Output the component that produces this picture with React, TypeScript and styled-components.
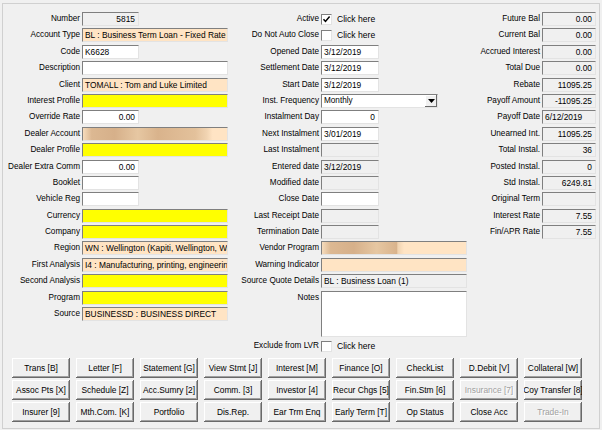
import React from "react";
import styled, { createGlobalStyle, css } from "styled-components";

const GlobalStyle = createGlobalStyle`
  html, body {
    margin: 0;
    padding: 0;
    background: #f0f0f0;
  }
  body {
    font-family: "Liberation Sans", Arial, sans-serif;
    font-size: 8.2px;
    color: #000;
  }
`;

type Tone = "gray" | "white" | "peach" | "yellow" | "smudge";

const toneBg: Record<Tone, string> = {
  gray: "#f0f0f0",
  white: "#ffffff",
  peach: "#ffe4c4",
  yellow: "#ffff00",
  smudge: "#ffe4c4",
};

export default function App() {
  return (
    <>
      <GlobalStyle />
      <Panel>
        <Columns>
          <Column $label={77} $field={146}>
            <Label>Number</Label>
            <Field $tone="gray" $w={57} $right>5815</Field>
            <Label>Account Type</Label>
            <Field $tone="peach">BL : Business Term Loan - Fixed Rate</Field>
            <Label>Code</Label>
            <Field $tone="white" $w={57}>K6628</Field>
            <Label>Description</Label>
            <Field $tone="white" />
            <Label>Client</Label>
            <Field $tone="peach">TOMALL : Tom and Luke Limited</Field>
            <Label>Interest Profile</Label>
            <Field $tone="yellow" />
            <Label>Override Rate</Label>
            <Field $tone="white" $w={57} $right>0.00</Field>
            <Label>Dealer Account</Label>
            <Field $tone="smudge" $smudge={90} />
            <Label>Dealer Profile</Label>
            <Field $tone="yellow" />
            <Label>Dealer Extra Comm</Label>
            <Field $tone="white" $w={57} $right>0.00</Field>
            <Label>Booklet</Label>
            <Field $tone="white" $w={57} />
            <Label>Vehicle Reg</Label>
            <Field $tone="white" $w={57} />
            <Label>Currency</Label>
            <Field $tone="yellow" />
            <Label>Company</Label>
            <Field $tone="yellow" />
            <Label>Region</Label>
            <Field $tone="peach">WN : Wellington (Kapiti, Wellington, Wairarapa)</Field>
            <Label>First Analysis</Label>
            <Field $tone="peach">I4 : Manufacturing, printing, engineering</Field>
            <Label>Second Analysis</Label>
            <Field $tone="yellow" />
            <Label>Program</Label>
            <Field $tone="yellow" />
            <Label>Source</Label>
            <Field $tone="peach">BUSINESSD : BUSINESS DIRECT</Field>
          </Column>

          <Column $label={91} $field={146}>
            <Label>Active</Label>
            <CheckRow>
              <CheckBox>
                <svg width="9" height="9" viewBox="0 0 9 9">
                  <path d="M1.5 4.2 L3.5 6.4 L7.6 1.6" fill="none" stroke="#000" strokeWidth="1.5" />
                </svg>
              </CheckBox>
              Click here
            </CheckRow>
            <Label>Do Not Auto Close</Label>
            <CheckRow>
              <CheckBox />
              Click here
            </CheckRow>
            <Label>Opened Date</Label>
            <Field $tone="white" $w={58}>3/12/2019</Field>
            <Label>Settlement Date</Label>
            <Field $tone="white" $w={58}>3/12/2019</Field>
            <Label>Start Date</Label>
            <Field $tone="white" $w={58}>3/12/2019</Field>
            <Label>Inst. Frequency</Label>
            <Select>
              <span>Monthly</span>
              <SelectArrow>
                <svg width="7" height="4" viewBox="0 0 7 4">
                  <path d="M0 0 H7 L3.5 4 Z" fill="#000" />
                </svg>
              </SelectArrow>
            </Select>
            <Label>Instalment Day</Label>
            <Field $tone="white" $w={58} $right>0</Field>
            <Label>Next Instalment</Label>
            <Field $tone="white" $w={58}>3/01/2019</Field>
            <Label>Last Instalment</Label>
            <Field $tone="gray" $w={58} />
            <Label>Entered date</Label>
            <Field $tone="gray" $w={58}>3/12/2019</Field>
            <Label>Modified date</Label>
            <Field $tone="gray" $w={58} />
            <Label>Close Date</Label>
            <Field $tone="white" $w={58} />
            <Label>Last Receipt Date</Label>
            <Field $tone="gray" $w={58} />
            <Label>Termination Date</Label>
            <Field $tone="gray" $w={58} />
            <Label>Vendor Program</Label>
            <Field $tone="smudge" $smudge={57} />
            <Label>Warning Indicator</Label>
            <Field $tone="peach" />
            <Label>Source Quote Details</Label>
            <Field $tone="gray">BL : Business Loan (1)</Field>
            <Label $top>Notes</Label>
            <Notes />
            <Label>Exclude from LVR</Label>
            <CheckRow>
              <CheckBox />
              Click here
            </CheckRow>
          </Column>

          <Column $label={73} $field={54}>
            <Label>Future Bal</Label>
            <Field $tone="gray" $right>0.00</Field>
            <Label>Current Bal</Label>
            <Field $tone="gray" $right>0.00</Field>
            <Label>Accrued Interest</Label>
            <Field $tone="gray" $right>0.00</Field>
            <Label>Total Due</Label>
            <Field $tone="gray" $right>0.00</Field>
            <Label>Rebate</Label>
            <Field $tone="gray" $right>11095.25</Field>
            <Label>Payoff Amount</Label>
            <Field $tone="gray" $right>-11095.25</Field>
            <Label>Payoff Date</Label>
            <Field $tone="gray">6/12/2019</Field>
            <Label>Unearned Int.</Label>
            <Field $tone="gray" $right>11095.25</Field>
            <Label>Total Instal.</Label>
            <Field $tone="gray" $right>36</Field>
            <Label>Posted Instal.</Label>
            <Field $tone="gray" $right>0</Field>
            <Label>Std Instal.</Label>
            <Field $tone="gray" $right>6249.81</Field>
            <Label>Original Term</Label>
            <Field $tone="gray" />
            <Label>Interest Rate</Label>
            <Field $tone="gray" $right>7.55</Field>
            <Label>Fin/APR Rate</Label>
            <Field $tone="gray" $right>7.55</Field>
          </Column>
        </Columns>

        <Buttons>
          <Button>Trans [B]</Button>
          <Button>Letter [F]</Button>
          <Button>Statement [G]</Button>
          <Button>View Stmt [J]</Button>
          <Button>Interest [M]</Button>
          <Button>Finance [O]</Button>
          <Button>CheckList</Button>
          <Button>D.Debit [V]</Button>
          <Button>Collateral [W]</Button>

          <Button>Assoc Pts [X]</Button>
          <Button>Schedule [Z]</Button>
          <Button>Acc.Sumry [2]</Button>
          <Button>Comm. [3]</Button>
          <Button>Investor [4]</Button>
          <Button>Recur Chgs [5]</Button>
          <Button>Fin.Stm [6]</Button>
          <Button disabled>Insurance [7]</Button>
          <Button>Coy Transfer [8]</Button>

          <Button>Insurer [9]</Button>
          <Button>Mth.Com. [K]</Button>
          <Button>Portfolio</Button>
          <Button>Dis.Rep.</Button>
          <Button>Ear Trm Enq</Button>
          <Button>Early Term [T]</Button>
          <Button>Op Status</Button>
          <Button>Close Acc</Button>
          <Button disabled>Trade-In</Button>
        </Buttons>
      </Panel>
    </>
  );
}

const Panel = styled.div`
  box-sizing: border-box;
  margin: 3px 0 0 2px;
  width: 598px;
  height: 426px;
  border: 1px solid #d0d0d0;
  padding-top: 8px;
`;

const Columns = styled.div`
  display: flex;
  align-items: flex-start;
`;

const Column = styled.div<{ $label: number; $field: number }>`
  display: grid;
  grid-template-columns: ${(p) => p.$label}px ${(p) => p.$field}px;
  grid-auto-rows: minmax(14px, auto);
  column-gap: 2px;
  row-gap: 2.4px;
`;

const Label = styled.div<{ $top?: boolean }>`
  text-align: right;
  white-space: nowrap;
  line-height: 14px;
  ${(p) =>
    p.$top &&
    css`
      align-self: start;
      line-height: 12px;
      padding-top: 1px;
    `}
`;

const sunken = css`
  box-sizing: border-box;
  border: 1px solid;
  border-color: #7f7f7f #e3e3e3 #e3e3e3 #7f7f7f;
`;

const Field = styled.div<{ $tone: Tone; $w?: number; $right?: boolean; $smudge?: number }>`
  ${sunken};
  width: ${(p) => (p.$w ? `${p.$w}px` : "100%")};
  height: 14px;
  background: ${(p) => toneBg[p.$tone]};
  padding: 0 ${(p) => (p.$right ? 3 : 2)}px 0 2px;
  line-height: 12px;
  font-size: 8.4px;
  white-space: nowrap;
  overflow: hidden;
  text-align: ${(p) => (p.$right ? "right" : "left")};
  ${(p) =>
    p.$smudge &&
    css`
      background: linear-gradient(
        90deg,
        #f6dcbc 0%,
        #dcb892 6%,
        #d6b08a 22%,
        #e6c7a2 38%,
        #d9b38c 52%,
        #e3c19b ${p.$smudge - 12}%,
        #f1d4b2 ${p.$smudge - 4}%,
        #ffe4c4 ${p.$smudge}%
      );
    `}
`;

const CheckRow = styled.div`
  display: flex;
  align-items: center;
  gap: 5px;
  line-height: 14px;
  font-size: 8.6px;
`;

const CheckBox = styled.span`
  ${sunken};
  display: flex;
  align-items: center;
  justify-content: center;
  width: 11px;
  height: 11px;
  background: #fff;
`;

const Select = styled.div`
  ${sunken};
  display: flex;
  align-items: center;
  justify-content: space-between;
  width: 117px;
  height: 14px;
  background: #fff;
  padding-left: 2px;
  line-height: 12px;
`;

const SelectArrow = styled.span`
  display: flex;
  align-items: center;
  justify-content: center;
  width: 12px;
  height: 12px;
  background: #f0f0f0;
  box-shadow: inset -1px -1px #696969, inset 1px 1px #fff;
`;

const Notes = styled.div`
  ${sunken};
  height: 46px;
  background: #fff;
`;

const Buttons = styled.div`
  display: grid;
  grid-template-columns: repeat(9, 58px);
  grid-auto-rows: 20px;
  column-gap: 6px;
  row-gap: 2px;
  margin: 5px 0 0 9px;
`;

const Button = styled.button`
  display: flex;
  align-items: center;
  justify-content: center;
  overflow: hidden;
  white-space: nowrap;
  padding: 0;
  margin: 0;
  border: none;
  background: #f0f0f0;
  box-shadow: inset -1px -1px #696969, inset 1px 1px #fff, inset -2px -2px #a0a0a0;
  font-family: "Liberation Sans", Arial, sans-serif;
  font-size: 8.4px;
  color: #000;

  &:disabled {
    color: #a0a0a0;
    text-shadow: 1px 1px #fff;
  }
`;
